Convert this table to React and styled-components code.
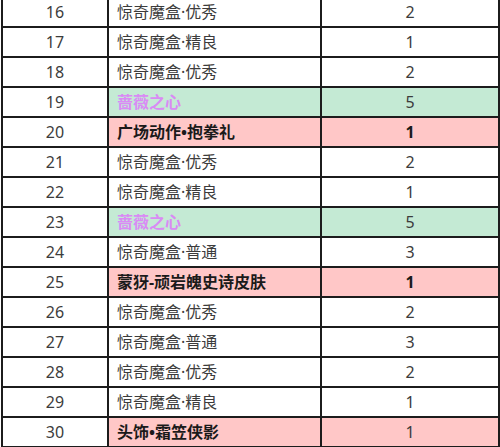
import styled, { createGlobalStyle } from "styled-components"

const rows = [
    { n: 16, name: "惊奇魔盒·优秀", count: 2 },
    { n: 17, name: "惊奇魔盒·精良", count: 1 },
    { n: 18, name: "惊奇魔盒·优秀", count: 2 },
    { n: 19, name: "蔷薇之心", count: 5, kind: "green" },
    { n: 20, name: "广场动作•抱拳礼", count: 1, kind: "red" },
    { n: 21, name: "惊奇魔盒·优秀", count: 2 },
    { n: 22, name: "惊奇魔盒·精良", count: 1 },
    { n: 23, name: "蔷薇之心", count: 5, kind: "green" },
    { n: 24, name: "惊奇魔盒·普通", count: 3 },
    { n: 25, name: "蒙犽-顽岩魄史诗皮肤", count: 1, kind: "red" },
    { n: 26, name: "惊奇魔盒·优秀", count: 2 },
    { n: 27, name: "惊奇魔盒·普通", count: 3 },
    { n: 28, name: "惊奇魔盒·优秀", count: 2 },
    { n: 29, name: "惊奇魔盒·精良", count: 1 },
    { n: 30, name: "头饰•霜笠侠影", count: 1, kind: "red", plainCount: true },
]

export default function App(){
    return (
        <>
            <Global />
            <Sheet>
                <colgroup>
                    <Col $w={106} />
                    <Col $w={213} />
                    <Col $w={178} />
                </colgroup>
                <tbody>
                    {rows.map(r => (
                        <tr key={r.n}>
                            <NumCell>{r.n}</NumCell>
                            <NameCell $kind={r.kind}>{r.name}</NameCell>
                            <NumCell $kind={r.kind} $bold={r.kind === "red" && !r.plainCount}>
                                {r.count}
                            </NumCell>
                        </tr>
                    ))}
                </tbody>
            </Sheet>
        </>
    )
}

const Global = createGlobalStyle`
    body{
        margin: 0;
        background: #ffffff;
        overflow: hidden;
    }
`

const fills = {
    green: "#c4ead4",
    red: "#ffc7c7",
}

const Col = styled.col`
    width: ${props => props.$w}px;
`

const Sheet = styled.table`
    border-collapse: collapse;
    table-layout: fixed;
    width: 499px;
    margin: -4px 0 0 1px;
    font-family: "Noto Sans", "Noto Sans CJK SC", sans-serif;
    font-size: 16px;
    color: #3c3c3c;

    td{
        border: 2px solid #1c1c1c;
        height: 28px;
        padding: 0;
        line-height: 28px;
        white-space: nowrap;
        overflow: hidden;
    }
`

const NumCell = styled.td`
    text-align: center;
    background: ${props => fills[props.$kind] || "#ffffff"};
    font-weight: ${props => props.$bold ? 700 : 400};
    color: ${props => props.$bold ? "#1a1a1a" : "#3c3c3c"};
`

const NameCell = styled.td`
    text-align: left;
    padding-left: 8px !important;
    background: ${props => fills[props.$kind] || "#ffffff"};
    font-weight: ${props => props.$kind ? 700 : 400};
    color: ${props => props.$kind === "green" ? "#d98bf4" : props.$kind === "red" ? "#1a1a1a" : "#3c3c3c"};
`
